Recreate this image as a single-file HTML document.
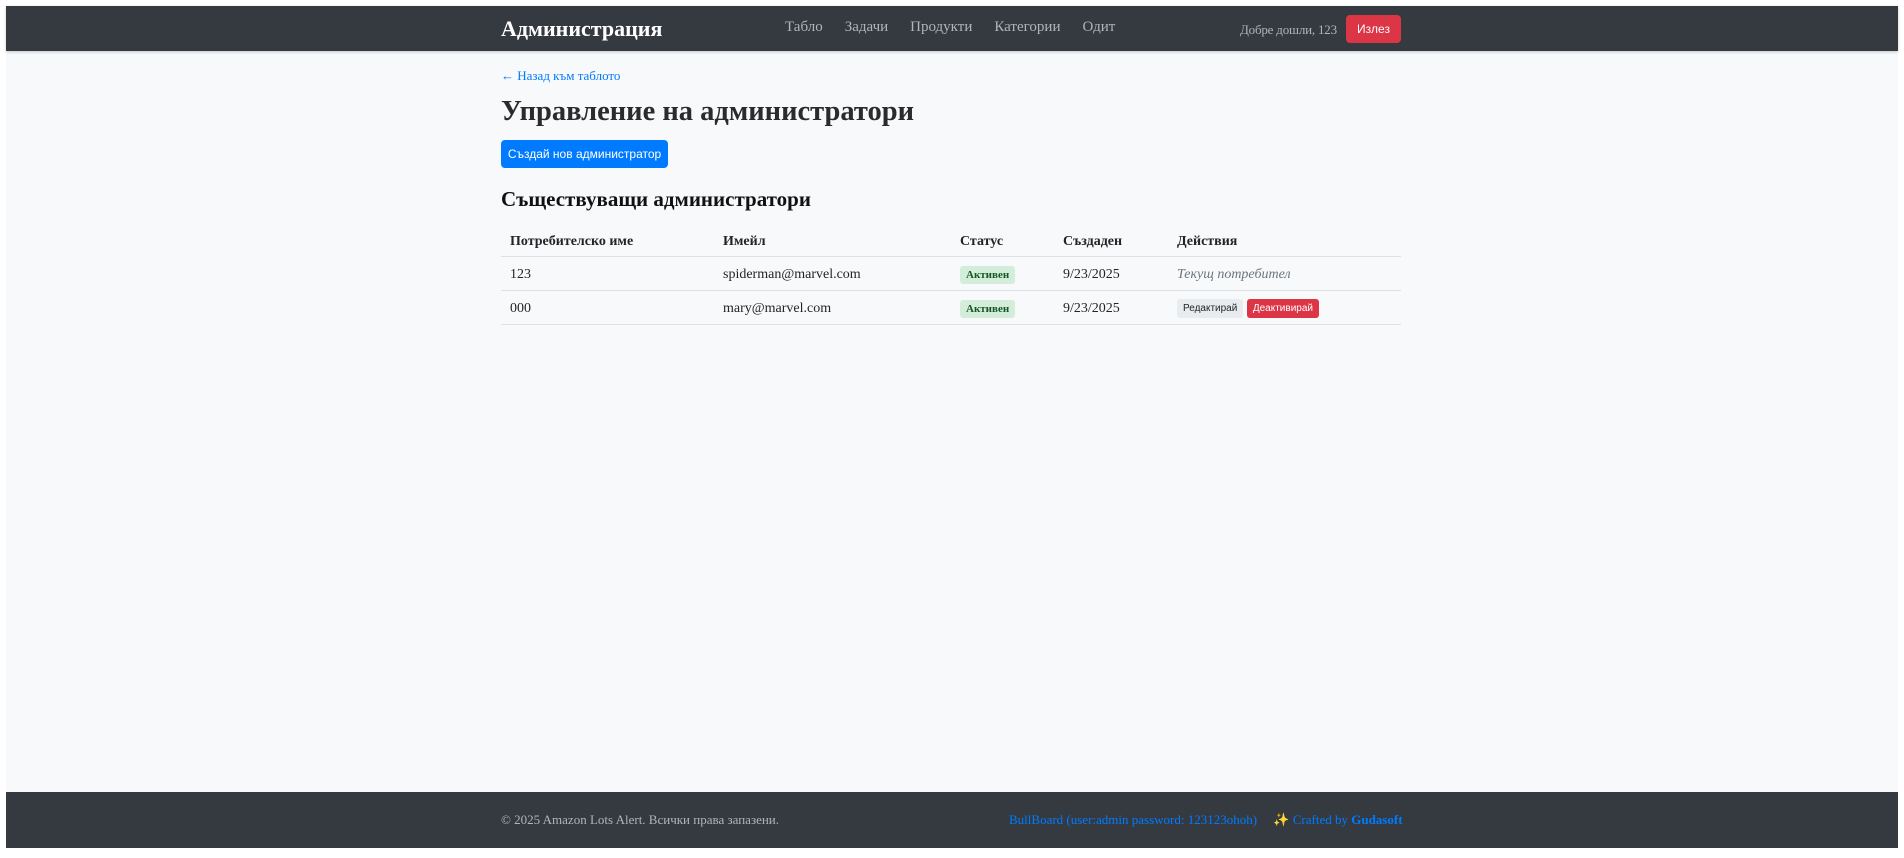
<!DOCTYPE html>
<html><head><meta charset="utf-8"><style>
*{box-sizing:border-box;margin:0;padding:0}
html,body{width:1904px;height:858px;background:#fff;overflow:hidden}
body{font-family:"Liberation Serif","DejaVu Serif",serif;color:#212529}
.page{position:absolute;left:6px;top:6px;width:1892px;height:842px;background:#f8f9fa}
.nav{position:absolute;left:0;top:0;width:1892px;height:45px;background:#343a40;box-shadow:0 1px 3px rgba(0,0,0,.2)}
.brand{position:absolute;left:495px;top:10px;color:#fff;font-weight:bold;font-size:22px}
.links{position:absolute;left:779px;top:13px;font-size:15px;color:#adb5bd}
.links span{margin-right:22px}
.welcome{position:absolute;left:1234px;top:16px;font-size:13px;color:#adb5bd;letter-spacing:-0.2px}
.logout{position:absolute;left:1340px;top:9px;width:55px;height:28px;background:#dc3545;border-radius:4px;color:#fff;font:12px "Liberation Sans",sans-serif;text-align:center;line-height:28px}
.back{position:absolute;left:495px;top:62px;font-size:13px;color:#007bff}
h1{position:absolute;left:495px;top:90px;font-size:28.5px;font-weight:bold;color:#2b2b2b}
.create{position:absolute;left:495px;top:134px;width:167px;height:28px;background:#007bff;border-radius:4px;color:#fff;font:12px "Liberation Sans",sans-serif;text-align:center;line-height:28px}
h2{position:absolute;left:495px;top:181px;font-size:21px;font-weight:bold;color:#111}
table{position:absolute;left:495px;top:228px;width:900px;border-collapse:collapse;font-size:14px}
th{text-align:left;font-weight:bold;height:22px;padding-left:9px;border-bottom:1px solid #dee2e6;vertical-align:top}
td{height:34px;padding-left:9px;padding-top:3px;border-bottom:1px solid #dee2e6}
.badge{display:inline-block;background:#d4edda;color:#155724;font-size:11px;font-weight:bold;padding:3px 6px;border-radius:3px}
.btn{display:inline-block;font:10px "Liberation Sans",sans-serif;padding:4px 6px;border-radius:3px}
.footer{position:absolute;left:0;top:786px;width:1892px;height:56px;background:#343a40;font-size:13px}
.fl{position:absolute;left:495px;top:20px;color:#adb5bd}
.fr{position:absolute;left:1003px;top:20px;color:#007bff}
</style></head><body><div class="page">
<div class="nav"><div class="brand">Администрация</div>
<div class="links"><span>Табло</span><span>Задачи</span><span>Продукти</span><span>Категории</span><span>Одит</span></div>
<div class="welcome">Добре дошли, 123</div><div class="logout">Излез</div></div>
<div class="back">← Назад към таблото</div>
<h1>Управление на администратори</h1>
<div class="create">Създай нов администратор</div>
<h2>Съществуващи администратори</h2>
<table>
<tr><th style="width:213px">Потребителско име</th><th style="width:237px">Имейл</th><th style="width:103px">Статус</th><th style="width:114px">Създаден</th><th>Действия</th></tr>
<tr><td>123</td><td>spiderman@marvel.com</td><td><span class="badge">Активен</span></td><td>9/23/2025</td><td style="font-style:italic;color:#6c757d">Текущ потребител</td></tr>
<tr><td>000</td><td>mary@marvel.com</td><td><span class="badge">Активен</span></td><td>9/23/2025</td><td><span class="btn" style="background:#e9ecef;color:#212529">Редактирай</span> <span class="btn" style="background:#dc3545;color:#fff">Деактивирай</span></td></tr>
</table>
<div class="footer"><div class="fl">© 2025 Amazon Lots Alert. Всички права запазени.</div>
<div class="fr">BullBoard (user:admin password: 123123ohoh) &nbsp;&nbsp;&nbsp; ✨ Crafted by <b>Gudasoft</b></div></div>
</div></body></html>
